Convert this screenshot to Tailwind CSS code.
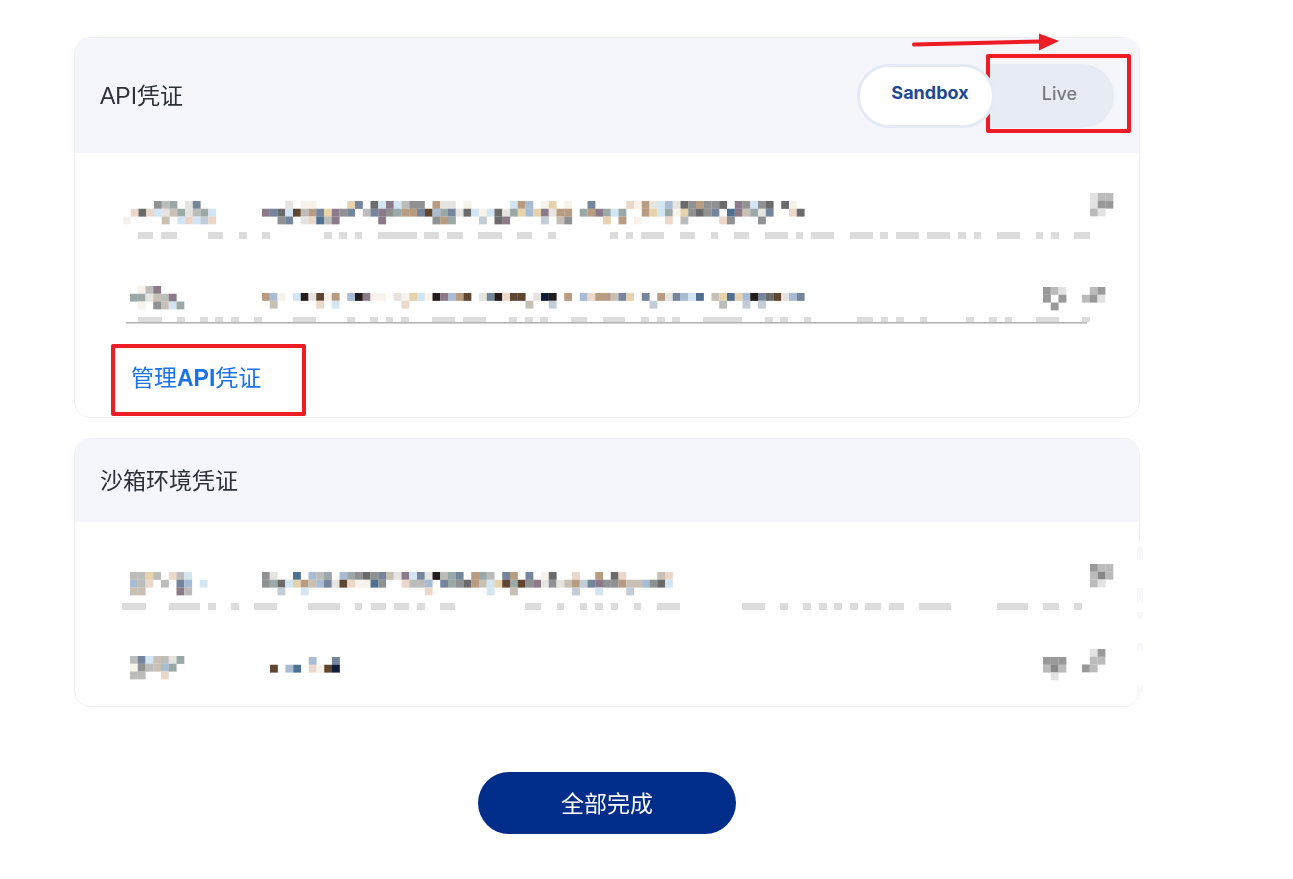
<!DOCTYPE html>
<html lang="zh-CN">

<head>
  <meta charset="UTF-8" />
  <title>API凭证</title>
  <script src="https://cdn.jsdelivr.net/npm/@tailwindcss/browser@4"></script>
</head>

<body class="bg-white font-['Liberation_Sans','Noto_Sans_CJK_SC',sans-serif]">
  <div class="relative w-[1293px] h-[879px] overflow-hidden pt-[37px] pl-[74px] blur-[0.4px]">

    <!-- API credentials -->
    <section class="w-[1066px] border border-[#eef0f6] rounded-2xl">
      <header class="h-[115px] bg-[#f4f6fb] rounded-t-2xl flex items-center justify-between pl-[25px] pr-[25px]">
        <h2 class="pt-[2px] text-[23px] text-[#2c3038]">API凭证</h2>
        <div class="flex items-center h-[64px] font-['Inter',sans-serif] text-[18px]">
          <button class="relative z-10 w-[138px] h-[64px] pl-[8px] pb-[6px] rounded-full bg-white border-[3px] border-[#e4eaf3] font-bold text-[#1d4a94]">Sandbox</button>
          <button class="w-[129px] h-[64px] -ml-[10px] pl-[20px] pb-[4px] rounded-r-full bg-[#e6ebf4] font-medium text-[#77797e]">Live</button>
        </div>
      </header>
      <svg id="mosaic-api" class="block w-full h-[183px] blur-[0.7px] overflow-visible" viewBox="75 153 1064 183"></svg>
      <div class="h-[81px] pl-[56px] pt-[4px] flex items-center">
        <a href="#" class="text-[23px] text-[#1a73e8]">管理<b>API</b>凭证</a>
      </div>
    </section>

    <!-- Sandbox credentials -->
    <section class="w-[1066px] mt-[20px] border border-[#eef0f6] rounded-2xl">
      <header class="h-[83px] bg-[#f4f6fb] rounded-t-2xl flex items-center pl-[25px] pt-[2px]">
        <h2 class="text-[23px] text-[#2c3038]">沙箱环境凭证</h2>
      </header>
      <svg id="mosaic-sandbox" class="block w-full h-[184px] blur-[0.7px] overflow-visible" viewBox="75 522 1064 184"></svg>
    </section>

    <div class="w-[1066px] flex justify-center mt-[65px]">
      <button class="w-[258px] h-[62px] pt-[2px] rounded-full bg-[#002d8a] text-white text-[23px]">全部完成</button>
    </div>

    <!-- Red annotations -->
    <div class="absolute left-[986px] top-[54px] w-[145px] h-[79px] border-[4px] border-[#ee1c25] rounded-[2px]"></div>
    <div class="absolute left-[111px] top-[344px] w-[195px] h-[72px] border-[4px] border-[#ee1c25] rounded-[2px]"></div>
    <svg class="absolute left-[905px] top-[28px] w-[160px] h-[28px]" viewBox="905 28 160 28">
      <path d="M914 44.5 L1042 41.5" stroke="#ee1c25" stroke-width="4" stroke-linecap="round" fill="none" />
      <path d="M1039 33.5 L1059 41 L1039 50.5 Z" fill="#ee1c25" />
    </svg>
  </div>

  <script>
    const palette = {
      k: '#231c1a', n: '#0f1c3a', b: '#5f4630', u: '#75859b', g: '#8f9193', d: '#6c6b6b',
      l: '#bcbcba', w: '#e6e4e0', t: '#b89c82', s: '#a9bcd4', c: '#d3e5f3', y: '#e6d3ac',
      p: '#8c7a8a', r: '#ebd8ca', m: '#c8c0b4', o: '#9aa8a8', e: '#f8f3ea', B: '#4f7091',
      N: '#c4ccd8', '#': '#999999', '+': '#bbbbbb', '-': '#e2e2e2', '*': '#888888'
    };
    const cell = 7.75;

    function rect(svg, x, y, w, h, fill) {
      const r = document.createElementNS('http://www.w3.org/2000/svg', 'rect');
      r.setAttribute('x', x);
      r.setAttribute('y', y);
      r.setAttribute('width', w);
      r.setAttribute('height', h);
      r.setAttribute('fill', fill);
      svg.appendChild(r);
    }

    // rows of colour letters, '.' stays blank
    function blocks(svg, x, y, rows) {
      rows.forEach((row, j) => {
        [...row].forEach((ch, i) => {
          if (ch !== '.') rect(svg, x + i * cell, y + j * cell, cell + 0.1, cell + 0.1, palette[ch]);
        });
      });
    }

    // faint dashes: flat list of start, end pairs
    function dashes(svg, y, h, list) {
      for (let i = 0; i < list.length; i += 2) rect(svg, list[i], y, list[i + 1] - list[i], h, '#dcdcdc');
    }

    const api = document.getElementById('mosaic-api');
    blocks(api, 123, 201, ['....glo.wu..', '.rdrcwmowloc', 'e....m.crcNr']);
    blocks(api, 262, 201, [
      '...w.ee....yu.dcpclgg.tww.e.....cts.ey.e..u....retwcswdgtggd.pgcgd.de',
      'pudcbltuypgu.lupgottubsouwdcecdwoysypwtt.otpoco..tycoeygdgu.Bpmowu..rd',
      '..gu.wrBlp.....p......gto...N.dp....N.mg....y.t.e...r.l....rg...g'
    ]);
    dashes(api, 232, 7, [138, 153, 161, 177, 208, 223, 239, 247, 262, 270, 324, 332, 339, 347, 355, 362, 378, 417, 424, 439, 447, 463, 478, 502, 517, 532, 548, 556, 610, 618, 626, 633, 641, 664, 680, 695, 711, 718, 734, 749, 765, 788, 796, 803, 811, 834, 850, 873, 880, 888, 896, 919, 927, 950, 958, 966, 974, 981, 997, 1020, 1036, 1043, 1051, 1059, 1074, 1090]);
    blocks(api, 1090, 193, ['-++', '-##', '+-.']);

    blocks(api, 130, 286, ['.elp', 'oowmlp', '.e.gmco']);
    blocks(api, 262, 293, [
      'tse.ckwbet.skpee.weycekpstb.wukrbb.wnk.t.srttmuy.u.twuscB.myByskudbwsu',
      '.m.....r.c........r...............m..N............N........l..N.N'
    ]);
    dashes(api, 317, 5, [138, 162, 177, 185, 200, 208, 215, 223, 231, 239, 254, 262, 293, 316, 347, 355, 370, 378, 386, 393, 401, 409, 432, 455, 463, 486, 509, 517, 525, 533, 540, 548, 571, 587, 603, 625, 641, 649, 657, 665, 672, 680, 703, 742, 765, 773, 780, 788, 804, 811, 857, 873, 881, 888, 896, 904, 920, 927, 966, 974, 989, 997, 1005, 1012, 1036, 1059, 1082, 1090]);
    rect(api, 126, 322, 961, 1.6, '#b5b5b5');
    blocks(api, 1043, 287, ['#+-', '#.#', '.#.']);
    blocks(api, 1082, 287, ['.+#', '+#-']);

    const sandbox = document.getElementById('mosaic-sandbox');
    blocks(sandbox, 130, 572, ['llyl.rlc', 'slr.l.us.c', 'mm....pl']);
    blocks(sandbox, 262, 572, [
      'gw..B.slo.sogdgumwpcuwklou.tol.ut.u.ed..r..t.dr....mr',
      'godcytmsuwbreeBg..rlls.uogdtmcybobgpwgwmtNupggtmmsgdc',
      '..N..c...............r.......c..m.......N..c...N'
    ]);
    dashes(sandbox, 603, 7, [122, 146, 169, 200, 208, 216, 231, 239, 254, 277, 308, 340, 355, 362, 371, 386, 394, 409, 417, 425, 440, 455, 525, 541, 557, 564, 580, 587, 595, 603, 611, 618, 634, 641, 657, 680, 742, 765, 780, 788, 803, 811, 819, 827, 834, 842, 850, 858, 865, 881, 889, 904, 919, 951, 997, 1028, 1043, 1059, 1074, 1082]);
    blocks(sandbox, 1090, 564, ['#++', '+*+', '+-.']);

    blocks(sandbox, 130, 656, ['lucmlwo', 'eglmso', 'll..r']);
    blocks(sandbox, 270, 657, ['.....s..u', 'b.sB.rebn']);
    blocks(sandbox, 1043, 657, ['###', '+*+', '.-.']);
    blocks(sandbox, 1082, 649, ['.-#', '.++', '#+.']);

    // right edge of the card is broken by the redaction here
    rect(sandbox, 1136, 540, 8, 150, '#ffffff');
    [[546, 14], [588, 14], [612, 7], [643, 7], [686, 6]].forEach(p => rect(sandbox, 1137, p[0], 6, p[1], '#f7f7fd'));
  </script>
</body>

</html>
